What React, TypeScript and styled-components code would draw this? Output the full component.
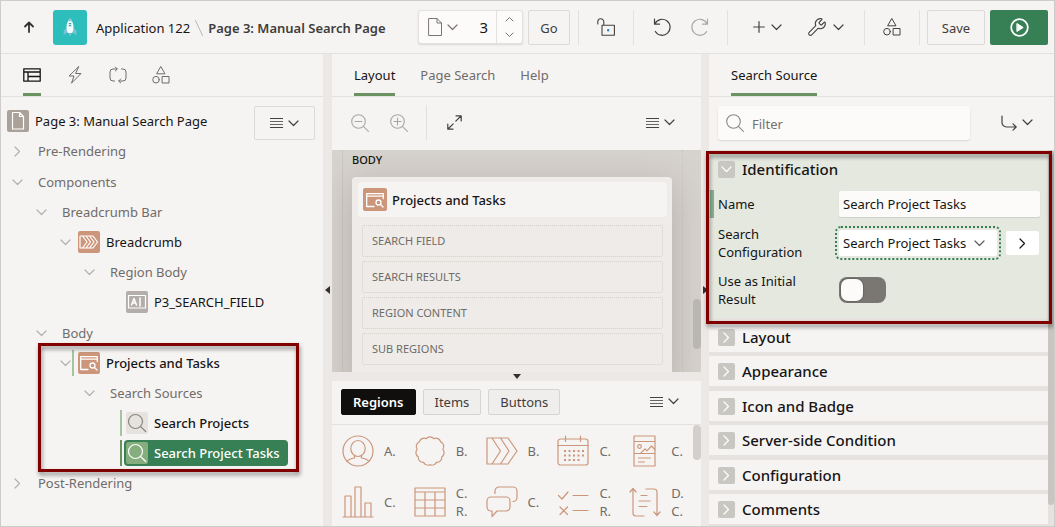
import React from 'react';
import styled, { createGlobalStyle, css } from 'styled-components';
import { Wrench } from 'lucide-react';

const c = {
  page: '#f6f4f3',
  gutter: '#ece8e5',
  line: '#e3e0dd',
  frame: '#cfcdcb',
  green: '#377f54',
  underline: '#6b9362',
  text: '#161513',
  muted: '#6f6c69',
  dim: '#a9a6a3',
  clay: '#cc967b',
  canvas: '#d6d2cd',
  card: '#eeebe8',
  callout: '#800000',
};

const Global = createGlobalStyle`
  *, *::before, *::after { box-sizing: border-box; }
  body { margin: 0; background: ${c.page}; color: ${c.text}; font: 13px/18px 'Noto Sans', sans-serif; }
  button, input, select { font: inherit; color: inherit; margin: 0; }
  button { background: none; border: 0; padding: 0; cursor: pointer; }
  ul { list-style: none; margin: 0; padding: 0; }
  h1, h2, h3, p { margin: 0; font-size: inherit; }
  svg { display: block; flex: none; }
`;

/* ---------- icons ---------- */

interface IconProps {
  w: number;
  h?: number;
  sw?: number;
  children: React.ReactNode;
}

const Icon = ({ w, h = w, sw = 1, children }: IconProps) => (
  <svg width={w} height={h} viewBox={`0 0 ${w} ${h}`} fill="none" stroke="currentColor" strokeWidth={sw} strokeLinecap="round" strokeLinejoin="round" aria-hidden="true">
    {children}
  </svg>
);

const ChevronDown = () => (
  <Icon w={11} h={7} sw={1.2}><path d="M1 1l4.5 4.5L10 1" /></Icon>
);
const ChevronUp = () => (
  <Icon w={9} h={6}><path d="M1 5l3.500-3.500L8 5" /></Icon>
);
const SmallDown = () => (
  <Icon w={9} h={6}><path d="M1 1l3.500 3.500L8 1" /></Icon>
);
const ChevronRight = () => (
  <Icon w={7} h={11} sw={1.2}><path d="M1 1l4.5 4.5L1 10" /></Icon>
);
const Lines = () => (
  <Icon w={13} h={12}>
    <path d="M0 1.500h13M0 10.500h13" strokeLinecap="butt" />
    <path d="M0 4.500h13M0 7.500h13" strokeLinecap="butt" strokeOpacity=".8" />
  </Icon>
);
const PageIcon = () => (
  <Icon w={14} h={18}><path d="M1 .5h8l4.500 4.500v12.500h-12.500zM9 .5v4.500h4.500" /></Icon>
);
const Magnifier = ({ sign }: { sign?: 'plus' | 'minus' }) => (
  <Icon w={18} h={18} sw={1.1}>
    <circle cx="7.500" cy="7.500" r="6.800" />
    <path d="M12.400 12.400l5 5" />
    {sign && <path d="M4 7.500h7" />}
    {sign === 'plus' && <path d="M7.500 4v7" />}
  </Icon>
);
const Shapes = () => (
  <Icon w={18} h={18}><path d="M9 .8l4 7h-8zM10.500 10.500h6.500v6.500h-6.500z" /><circle cx="4" cy="13.700" r="3.300" /></Icon>
);
const UpArrow = () => (
  <Icon w={12} h={12} sw={1.8}><path d="M6 11V1.500M2 5.500L6 1.500l4 4" /></Icon>
);
const Rocket = () => (
  <Icon w={14} h={18} sw={0}>
    <path d="M3.500 9.500L.6 13v4l4-2.500zM10.500 9.500l2.900 3.500v4l-4-2.500z" fill="#7cc0dc" />
    <path d="M7 1.500c2.700 2 3.500 4.500 3.500 7 0 2.400-.4 4.400-1.300 6.500H4.800C3.900 12.900 3.500 10.900 3.500 8.500 3.500 6 4.300 3.500 7 1.500z" fill="#f4fbfb" />
    <path d="M7 0c1 .8 1.900 2 2.400 3.200H4.600C5.100 2 6 .8 7 0zM5.400 15.500h3.200L7 18z" fill="#8fcbe0" />
    <path d="M5.800 5h2.400v1.200H5.800zM5.800 7h2.400v1.200H5.800z" fill="#3aa6ac" />
  </Icon>
);
const Unlock = () => (
  <Icon w={18} h={18} sw={1.1}>
    <path d="M.8 6V3.800a3 3 0 016 0v3.500M5 7.300h12.400v9.900H5z" />
    <circle cx="11.200" cy="12.200" r=".7" fill="#3584c6" stroke="#3584c6" />
  </Icon>
);
const Undo = () => (
  <Icon w={18} h={18} sw={1.2}><path d="M1.500 1.200v5h5M1.800 6A8 8 0 1 1 2.300 13.500" /></Icon>
);
const Redo = () => (
  <Icon w={18} h={18} sw={1.2}><path d="M16.500 1.200v5h-5M16.200 6A8 8 0 1 0 15.700 13.500" /></Icon>
);
const Plus = () => (
  <Icon w={12} h={12} sw={1.2}><path d="M6 .7v10.600M.7 6h10.600" /></Icon>
);
const Run = () => (
  <Icon w={19} h={19} sw={1.8}><circle cx="9.500" cy="9.500" r="8.300" /><path d="M7.200 5.700l6 3.800-6 3.800z" fill="currentColor" strokeWidth="1" /></Icon>
);
const Tree = () => (
  <Icon w={18} h={14} sw={1.3}><path d="M.8.8h16.400v12.400H.8zM.8 4h16.400M5 4v9M5 8.500h12" /></Icon>
);
const Bolt = () => (
  <Icon w={14} h={18}><path d="M10.500.8L1 10h5l-2.500 7.200L13 7.500H8z" /></Icon>
);
const Cycle = () => (
  <Icon w={18} h={18}>
    <path d="M8 3H4A3 3 0 001 6v6a3 3 0 003 3h1.500M10 15h4a3 3 0 003-3V6a3 3 0 00-3-3h-1.500" />
    <path d="M6.300 1L8.300 3l-2 2M11.700 13L9.700 15l2 2" />
  </Icon>
);
const Expand = () => (
  <Icon w={15} h={15} sw={1.2}><path d="M9 .8h5.200V6M14 1L8.800 6.200M6 14.200H.8V9M1 14l5.200-5.200" /></Icon>
);
const GoTo = () => (
  <Icon w={16} h={16} sw={1.2}><path d="M1 1v6.500a4.500 4.500 0 004.500 4.500H15M12 8.800L15.200 12 12 15.200" /></Icon>
);
const TilePage = () => (
  <Icon w={22} sw={1.2}><path d="M5.500 2.500h7l4 4v12.500h-11zM12.500 2.500v4h4" /></Icon>
);
const TileBreadcrumb = () => (
  <Icon w={22} sw={1.2}><path d="M2 5h13l4.500 6-4.500 6H2zM4.500 5L9 11l-4.500 6M8 5l4.500 6L8 17M11.500 5l4.500 6-4.500 6" /></Icon>
);
const TileField = () => (
  <Icon w={22} sw={1.2}><path d="M2.500 4.500h17v12.500h-17z" /><path d="M5.500 14l2.500-6.500 2.500 6.500M6.400 12h3.200M14 7v8" strokeWidth="1.500" /></Icon>
);
const TileSearchRegion = () => (
  <Icon w={22} sw={1.3}>
    <path d="M10 17.500H2.700V4.700h16.600v5M2.700 7.200h16.600" />
    <circle cx="14.500" cy="13.500" r="2.500" /><path d="M16.500 15.500l2.500 2.500" />
  </Icon>
);
const TileSearch = () => (
  <Icon w={22} sw={1.2}><circle cx="9.500" cy="9.500" r="7" /><path d="M14.500 14.500l5.200 5" /></Icon>
);

const Avatar = () => (
  <Icon w={32} sw={1.2}>
    <circle cx="16" cy="16" r="15" /><ellipse cx="16" cy="13.500" rx="7.200" ry="8" />
    <path d="M5 26.500c1.500-2 3.500-3 7.500-3.500v-2.500M27 26.500c-1.500-2-3.500-3-7.500-3.500v-2.500" />
  </Icon>
);
const Badge = () => (
  <Icon w={32} sw={1.2}>
    <path d="M12.200 3.600a5 5 0 017.600 0 5 5 0 016.900 3.300 5 5 0 012.200 7.400 5 5 0 01-1.100 7.500 5 5 0 01-5.400 5.600 5 5 0 01-6.400 2.300 5 5 0 01-6.400-2.300 5 5 0 01-5.400-5.600 5 5 0 01-1.100-7.500 5 5 0 012.200-7.400 5 5 0 016.900-3.300z" />
  </Icon>
);
const BreadcrumbBig = () => (
  <Icon w={32} sw={1.2}><path d="M1 3h21l9 13-9 13H1zM6 3l8.500 13L6 29M14.500 3L23 16l-8.500 13" /></Icon>
);
const Calendar = () => (
  <Icon w={32} sw={1.2}>
    <rect x="1" y="4" width="30" height="26" rx="2.500" />
    <path d="M1 10.500h30M8.500 1v5.500M23.500 1v5.500" />
    <path d="M7 16h20M7 20.500h20M7 25h15.500" strokeWidth="2" strokeLinecap="butt" strokeDasharray="2 2.500" />
  </Icon>
);
const Cards = () => (
  <Icon w={32} sw={1.2}>
    <path d="M5 1h21v30H5zM5 6.500h21M5 18.500h21M9.500 23h12M9.500 27h6" />
    <circle cx="10.500" cy="11.500" r="1.800" /><path d="M11.500 18.300l4.500-4.500 2 2 4.500-4.800 3.300 3.500" />
  </Icon>
);
const Chart = () => (
  <Icon w={32} sw={1.2}><path d="M1 31h30M3 31V10h6v21M13 31V1h6v30M23 31V17h6v14" /></Icon>
);
const Grid = () => (
  <Icon w={32} sw={1.2}><path d="M1 2h30v28H1zM1 6h30M1 14h30M1 22h30M11 6v24M21 6v24" /></Icon>
);
const Comments = () => (
  <Icon w={32} sw={1.2}>
    <path d="M5 11h15a4 4 0 014 4v6a4 4 0 01-4 4h-9l-5 5.500V25H5a4 4 0 01-4-4v-6a4 4 0 014-4z" />
    <path d="M9 7.500V5a4 4 0 014-4h14a4 4 0 014 4v6.500a4 4 0 01-4 4" />
  </Icon>
);
const Checks = () => (
  <Icon w={32} sw={1.2}><path d="M1.500 9.500l3.500 3.500L11 6M16 9.500h15M3 21l7.500 7.500M10.500 21L3 28.500M16 24.500h15" /></Icon>
);
const Scroller = () => (
  <Icon w={32} sw={1.2}>
    <path d="M4 3v24a3 3 0 003 3h8M1 6l3-3.500L7 6M28 29V5.500A3 3 0 0025 3h-8M25 26l3 3.500 3-3.500M12 9.500h6M10 15h11M10 20.500h8" />
  </Icon>
);

/* ---------- shell ---------- */

const App = styled.div`
  height: 100vh;
  display: flex;
  flex-direction: column;
  border: 1px solid ${c.frame};
  overflow: hidden;
`;
const Header = styled.header`
  display: flex;
  align-items: center;
  height: 53px;
  flex: none;
  padding: 0 6px 0 22px;
  border-bottom: 1px solid ${c.line};
`;
const UpButton = styled.button`
  margin-right: 18px;
  color: #33312f;
`;
const AppTile = styled.span`
  display: grid;
  place-items: center;
  width: 34px;
  height: 35px;
  margin-right: 9px;
  border-radius: 3px;
  background: #2dbdbb;
`;
const Crumbs = styled.nav`
  display: flex;
  align-items: center;
  gap: 5px;
  flex: 1;
  min-width: 0;
  padding-top: 2px;
  white-space: nowrap;
`;
const CrumbLink = styled.a`
  color: ${c.text};
  text-decoration: none;
`;
const Slash = styled.span`
  color: #b9b6b3;
`;
const Title = styled.h1`
  font-size: 13px;
  font-weight: 600;
  color: #3f3d3b;
`;
const PagePicker = styled.div`
  display: flex;
  width: 105px;
  height: 34px;
  border: 1px solid ${c.line};
  border-radius: 3px;
  background: #fcfbfa;
  box-shadow: 0 1px 2px rgba(0, 0, 0, 0.12);
`;
const PickerMenu = styled.button`
  display: flex;
  align-items: center;
  gap: 5px;
  padding-left: 9px;
  color: #7b7672;
`;
const PageNumber = styled.input`
  flex: 1;
  min-width: 0;
  border: 0;
  padding: 0 8px 0 0;
  background: none;
  text-align: right;
  font-size: 15px;
`;
const Spinner = styled.div`
  display: grid;
  width: 26px;
  border-left: 1px solid ${c.line};
  color: #7b7672;
  button { display: grid; place-items: center; }
`;
const Outline = styled.button<{ $w: number }>`
  width: ${(p) => p.$w}px;
  height: 35px;
  padding-top: 2px;
  border: 1px solid #dcd9d6;
  border-radius: 2px;
  color: #3f3d3b;
`;
const RunButton = styled.button`
  display: grid;
  place-items: center;
  width: 58px;
  height: 35px;
  border-radius: 2px;
  background: ${c.green};
  color: #fff;
`;
const Controls = styled.div`
  display: flex;
  align-items: center;
  gap: 5px;
`;
const ToolGroup = styled.div<{ $w: number }>`
  display: flex;
  align-items: center;
  justify-content: center;
  width: ${(p) => p.$w}px;
  height: 35px;
  border-left: 1px solid ${c.line};
`;
const Tools = styled.div`
  display: flex;
  margin: 0 7px 0 8px;
  border-right: 1px solid ${c.line};
`;
const Tool = styled.button<{ $w: number; $off?: boolean }>`
  display: flex;
  align-items: center;
  justify-content: center;
  gap: 6px;
  width: ${(p) => p.$w}px;
  height: 35px;
  color: ${(p) => (p.$off ? c.dim : '#45413e')};
`;

const Workspace = styled.main`
  flex: 1;
  min-height: 0;
  display: grid;
  grid-template-columns: minmax(0, 322fr) 9px minmax(0, 369fr) 8px minmax(0, 345fr);
  grid-template-rows: minmax(0, 1fr);
`;
const Panel = styled.section`
  display: flex;
  flex-direction: column;
  min-width: 0;
  min-height: 0;
`;
const Splitter = styled.div<{ $row?: boolean }>`
  display: flex;
  flex: none;
  align-items: center;
  justify-content: center;
  background: ${c.gutter};
  color: #33312f;
  ${(p) => p.$row && css`height: 9px;`}
`;
const Tabs = styled.div`
  display: flex;
  flex: none;
  gap: 25px;
  height: 43px;
  padding: 0 22px;
  border-bottom: 1px solid ${c.line};
`;
const Tab = styled.button<{ $on?: boolean }>`
  display: grid;
  place-items: center;
  min-width: 18px;
  padding-top: 3px;
  border-bottom: 3px solid ${(p) => (p.$on ? c.underline : 'transparent')};
  color: ${(p) => (p.$on ? c.text : c.muted)};
  white-space: nowrap;
`;
const IconMenu = styled.button<{ $boxed?: boolean }>`
  display: flex;
  align-items: center;
  justify-content: center;
  gap: 5px;
  width: 61px;
  height: 34px;
  border: 1px solid ${(p) => (p.$boxed ? '#dcd9d6' : 'transparent')};
  border-radius: 2px;
  color: #45413e;
`;

/* ---------- component tree ---------- */

const PageRow = styled.div`
  display: flex;
  align-items: center;
  gap: 6px;
  flex: none;
  height: 34px;
  margin-top: 9px;
  padding: 0 8px 0 6px;
`;
const PageRowTitle = styled.h2`
  flex: 1;
  margin-bottom: 4px;
  font-weight: 400;
`;
const Tile = styled.span<{ $bg: string; $raise?: boolean }>`
  display: grid;
  place-items: center;
  flex: none;
  width: 22px;
  height: 22px;
  border-radius: 2px;
  background: ${(p) => p.$bg};
  color: #fff;
  ${(p) => p.$raise && css`margin-bottom: 4px;`}
`;
const TreeRows = styled.div`
  margin-top: -4px;
`;
const RowBox = styled.li<{ $level: number; $section?: boolean }>`
  display: flex;
  align-items: center;
  height: 30px;
  margin-top: ${(p) => (p.$section ? 1 : 0)}px;
  padding-left: ${(p) => 9 + p.$level * 24}px;
  white-space: nowrap;
`;
const Caret = styled.button`
  display: grid;
  place-items: center;
  width: 14px;
  height: 20px;
  color: #b3b0ad;
`;
const Group = styled.span`
  margin-left: 14px;
  color: ${c.muted};
`;
const Mark = styled.span<{ $color: string }>`
  width: 2px;
  height: 26px;
  margin-right: 2px;
  background: ${(p) => p.$color};
`;
const Node = styled.span<{ $selected?: boolean; $bold?: boolean }>`
  display: flex;
  align-items: center;
  gap: 6px;
  height: 26px;
  padding: 0 8px 0 2px;
  border-radius: 4px;
  font-weight: ${(p) => (p.$bold ? 500 : 400)};
  ${(p) => p.$selected && css`background: ${c.green}; color: #fff;`}
`;
const CalloutGroup = styled.div`
  position: relative;
`;
const Callout = styled.div<{ $inset: string }>`
  position: absolute;
  inset: ${(p) => p.$inset};
  z-index: 2;
  border: 3px solid ${c.callout};
  filter: drop-shadow(1px 3px 2px rgba(0, 0, 0, 0.45));
  pointer-events: none;
`;

interface RowProps {
  level: number;
  text: string;
  open?: boolean;
  leaf?: boolean;
  section?: boolean;
  icon?: React.ReactNode;
  tile?: string;
  mark?: string;
  bold?: boolean;
  selected?: boolean;
}

const Row = ({ level, text, open, leaf, section, icon, tile, mark, bold, selected }: RowProps) => (
  <RowBox $level={level} $section={section}>
    <Caret as={leaf ? 'span' : 'button'} aria-label={leaf ? undefined : `Toggle ${text}`}>
      {!leaf && (open ? <ChevronDown /> : <ChevronRight />)}
    </Caret>
    {icon ? (
      <>
        <Mark $color={mark ?? 'transparent'} />
        <Node $selected={selected} $bold={bold}>
          <Tile $bg={tile ?? c.clay}>{icon}</Tile>
          {text}
        </Node>
      </>
    ) : (
      <Group>{text}</Group>
    )}
  </RowBox>
);

/* ---------- layout editor ---------- */

const Toolbar = styled.div`
  display: flex;
  align-items: center;
  flex: none;
  height: 53px;
  padding: 0 10px 2px 9px;
`;
const ToolbarEnd = styled.div`
  margin-left: auto;
`;
const Rule = styled.span`
  width: 1px;
  height: 35px;
  margin: 0 8px;
  background: ${c.line};
`;
const Canvas = styled.div`
  position: relative;
  flex: 1;
  min-height: 0;
  overflow: hidden;
  padding: 0 18px 0 10px;
  background: ${c.canvas};
`;
const CanvasZone = styled.div`
  height: 100%;
  padding: 1px 10px 0 9px;
  border: solid #c9c5c0;
  border-width: 0 1px;
  border-right-style: dotted;
`;
const ZoneLabel = styled.h2`
  font-size: 11px;
  font-weight: 500;
`;
const RegionCard = styled.div`
  margin-top: 8px;
  padding: 5px 5px 24px 6px;
  border-radius: 4px;
  background: ${c.card};
  box-shadow: 0 8px 36px rgba(60, 50, 40, 0.22);
`;
const RegionTitle = styled.h3`
  display: flex;
  align-items: center;
  gap: 5px;
  height: 35px;
  padding-left: 5px;
  border-radius: 4px;
  background: ${c.page};
  font-weight: 500;
`;
const TileLarge = styled(Tile)`
  width: 24px;
  height: 23px;
`;
const Slots = styled.ul`
  display: grid;
  gap: 4px;
  padding: 8px 4px 0;
`;
const Slot = styled.li`
  height: 32px;
  padding: 0 9px;
  border: 1px dotted #d3cfcb;
  border-radius: 2px;
  color: ${c.muted};
  font-size: 11px;
  line-height: 30px;
`;
const Thumb = styled.div<{ $top: string; $h: string; $w: number; $color: string }>`
  position: absolute;
  top: ${(p) => p.$top};
  right: 0;
  width: ${(p) => p.$w}px;
  height: ${(p) => p.$h};
  border-radius: 4px;
  background: ${(p) => p.$color};
`;

/* ---------- gallery ---------- */

const GalleryBar = styled.div`
  display: flex;
  align-items: center;
  gap: 7px;
  flex: none;
  height: 44px;
  padding: 0 6px 2px 9px;
  border-bottom: 1px solid ${c.line};
`;
const Pill = styled.button<{ $on?: boolean }>`
  height: 26px;
  padding: 0 11px;
  border: 1px solid ${(p) => (p.$on ? '#100f0d' : '#d6d3d0')};
  border-radius: 2px;
  background: ${(p) => (p.$on ? '#100f0d' : '#f0eeec')};
  color: ${(p) => (p.$on ? '#fff' : '#3f3d3b')};
  font-weight: ${(p) => (p.$on ? 600 : 400)};
`;
const Gallery = styled.div`
  position: relative;
  flex: none;
`;
const GalleryItems = styled.ul`
  display: grid;
  grid-template-columns: repeat(5, minmax(0, 1fr));
  align-content: start;
  row-gap: 15px;
  height: 101px;
  padding: 8px 0 0 10px;
`;
const GalleryItem = styled.li`
  display: flex;
  align-items: center;
  gap: 10px;
  height: 36px;
  color: ${c.muted};
  svg { color: ${c.clay}; }
`;
const ItemText = styled.span`
  width: 12px;
`;

/* ---------- property editor ---------- */

const FilterBox = styled.label`
  display: flex;
  align-items: center;
  gap: 8px;
  flex: 1;
  height: 34px;
  padding-left: 8px;
  border-radius: 3px;
  background: #fcfbfa;
  box-shadow: 0 1px 2px rgba(0, 0, 0, 0.12);
  color: #8b8783;
`;
const FilterInput = styled.input`
  flex: 1;
  min-width: 0;
  border: 0;
  padding: 2px 0 0;
  background: none;
  outline: 0;
  &::placeholder { color: #75716e; opacity: 1; }
`;
const FilterBar = styled(Toolbar)`
  gap: 16px;
  padding-right: 7px;
`;
const Properties = styled.div`
  position: relative;
  flex: 1;
  min-height: 0;
  padding-right: 6px;
  background: #e6e2df;
`;
const Section = styled.section`
  border-bottom: 4px solid #e6e2df;
  background: ${c.page};
  &:nth-child(odd) { border-bottom-width: 5px; }
`;
const SectionHead = styled.button`
  display: flex;
  align-items: center;
  gap: 7px;
  width: 100%;
  height: 30px;
  padding-left: 9px;
  text-align: left;
`;
const SectionName = styled.span`
  font-size: 15px;
  font-weight: 500;
`;
const Toggler = styled.span`
  display: grid;
  place-items: center;
  width: 17px;
  height: 17px;
  border-radius: 2px;
  background: #c9c7c1;
  color: #fff;
`;
const Identification = styled.div`
  position: relative;
  padding: 4px 0 1px;
  background: #e4e8df;
  border-bottom: 4px solid #e6e2df;
`;
const Field = styled.div<{ $h: number }>`
  position: relative;
  display: flex;
  align-items: center;
  min-height: ${(p) => p.$h}px;
  padding: 0 8px 0 9px;
`;
const ChangeBar = styled.span`
  position: absolute;
  left: 1px;
  width: 4px;
  height: 28px;
  background: #85b393;
`;
const FieldLabel = styled.label`
  flex: none;
  width: 121px;
  padding-right: 28px;
`;
const TextBox = styled.input`
  flex: 1;
  min-width: 0;
  height: 26px;
  padding: 0 4px;
  border: 0;
  border-radius: 2px;
  background: #fcfbfa;
  box-shadow: 0 1px 1px rgba(0, 0, 0, 0.1);
`;
const SelectWrap = styled.div`
  position: relative;
  display: flex;
  flex: 1;
  min-width: 0;
  outline: 2px dotted ${c.green};
  outline-offset: 2px;
  border-radius: 2px;
  svg { position: absolute; right: 12px; top: 10px; pointer-events: none; color: #5f5b58; }
`;
const Select = styled.select`
  flex: 1;
  min-width: 0;
  height: 26px;
  padding: 0 4px;
  border: 0;
  border-radius: 2px;
  background: #fff;
  appearance: none;
`;
const OpenButton = styled.button`
  display: grid;
  place-items: center;
  width: 33px;
  height: 24px;
  margin: 0 1px 0 9px;
  border-radius: 2px;
  background: #fff;
`;
const Switch = styled.input`
  appearance: none;
  width: 47px;
  height: 26px;
  border-radius: 8px;
  background: #7a7772;
  &::before {
    content: '';
    display: block;
    width: 22px;
    height: 22px;
    margin: 2px;
    border-radius: 7px;
    background: #fcfbfa;
    box-shadow: 0 0 1px 1px rgba(0, 0, 0, 0.15);
  }
`;

const gallery: [React.ReactNode, string][] = [
  [<Avatar />, 'A.'], [<Badge />, 'B.'], [<BreadcrumbBig />, 'B.'], [<Calendar />, 'C.'], [<Cards />, 'C.'],
  [<Chart />, 'C.'], [<Grid />, 'C. R.'], [<Comments />, 'C.'], [<Checks />, 'C. R.'], [<Scroller />, 'D. C.'],
];

const GreySearch = () => (
  <Icon w={22} sw={1.2}>
    <circle cx="9.500" cy="9.500" r="7" stroke="#8b8783" />
    <path d="M14.500 14.500l5.200 5" stroke="#8b8783" />
  </Icon>
);

export default function PageDesigner() {
  return (
    <App>
      <Global />
      <Header>
        <UpButton aria-label="Up"><UpArrow /></UpButton>
        <AppTile><Rocket /></AppTile>
        <Crumbs>
          <CrumbLink href="#app">Application 122</CrumbLink>
          <Slash><Icon w={8} h={16}><path d="M.5.5l7 15" /></Icon></Slash>
          <Title>Page 3: Manual Search Page</Title>
        </Crumbs>
        <Controls>
          <PagePicker>
            <PickerMenu aria-label="Choose page"><PageIcon /><ChevronDown /></PickerMenu>
            <PageNumber aria-label="Page number" defaultValue="3" />
            <Spinner>
              <button aria-label="Next page"><ChevronUp /></button>
              <button aria-label="Previous page"><SmallDown /></button>
            </Spinner>
          </PagePicker>
          <Outline $w={42}>Go</Outline>
        </Controls>
        <Tools>
          <ToolGroup $w={55}><Tool $w={38} aria-label="Unlock"><Unlock /></Tool></ToolGroup>
          <ToolGroup $w={94}>
            <Tool $w={38} aria-label="Undo"><Undo /></Tool>
            <Tool $w={38} $off aria-label="Redo"><Redo /></Tool>
          </ToolGroup>
          <ToolGroup $w={137}>
            <Tool $w={58} aria-label="Create"><Plus /><ChevronDown /></Tool>
            <Tool $w={58} aria-label="Utilities"><Wrench size={20} strokeWidth={1.3} /><ChevronDown /></Tool>
          </ToolGroup>
          <ToolGroup $w={55}><Tool $w={38} aria-label="Shared components"><Shapes /></Tool></ToolGroup>
        </Tools>
        <Controls>
          <Outline $w={58}>Save</Outline>
          <RunButton aria-label="Save and run page"><Run /></RunButton>
        </Controls>
      </Header>

      <Workspace>
        <Panel>
          <Tabs role="tablist">
            <Tab $on role="tab" aria-label="Rendering"><Tree /></Tab>
            <Tab role="tab" aria-label="Dynamic actions"><Bolt /></Tab>
            <Tab role="tab" aria-label="Processing"><Cycle /></Tab>
            <Tab role="tab" aria-label="Shared components"><Shapes /></Tab>
          </Tabs>
          <PageRow>
            <Tile $bg="#aaa198" $raise><TilePage /></Tile>
            <PageRowTitle>Page 3: Manual Search Page</PageRowTitle>
            <IconMenu $boxed aria-label="Tree menu"><Lines /><ChevronDown /></IconMenu>
          </PageRow>
          <TreeRows>
            <ul>
              <Row level={0} text="Pre-Rendering" />
              <Row level={0} text="Components" open section />
              <Row level={1} text="Breadcrumb Bar" open />
              <Row level={2} text="Breadcrumb" open icon={<TileBreadcrumb />} />
              <Row level={3} text="Region Body" open />
              <Row level={4} text="P3_SEARCH_FIELD" leaf icon={<TileField />} tile="#b3adab" />
              <Row level={1} text="Body" open section />
            </ul>
            <CalloutGroup>
              <ul>
                <Row level={2} text="Projects and Tasks" open icon={<TileSearchRegion />} mark="#a5c3a0" bold />
                <Row level={3} text="Search Sources" open />
                <Row level={4} text="Search Projects" leaf icon={<GreySearch />} tile="#e5e2df" mark="#a5c3a0" bold />
                <Row level={4} text="Search Project Tasks" leaf icon={<TileSearch />} tile="#86ad7d" mark="#6b9362" bold selected />
              </ul>
              <Callout $inset="-5px 24px -4px 37px" />
            </CalloutGroup>
            <ul><Row level={0} text="Post-Rendering" /></ul>
          </TreeRows>
        </Panel>

        <Splitter><Icon w={5} h={8} sw={0}><path d="M5 0v8L0 4z" fill="currentColor" /></Icon></Splitter>

        <Panel>
          <Tabs role="tablist">
            <Tab $on role="tab">Layout</Tab>
            <Tab role="tab">Page Search</Tab>
            <Tab role="tab">Help</Tab>
          </Tabs>
          <Toolbar>
            <Tool $w={38} $off aria-label="Zoom out"><Magnifier sign="minus" /></Tool>
            <Tool $w={39} $off aria-label="Zoom in"><Magnifier sign="plus" /></Tool>
            <Rule />
            <Tool $w={38} aria-label="Expand"><Expand /></Tool>
            <ToolbarEnd><IconMenu aria-label="Layout menu"><Lines /><ChevronDown /></IconMenu></ToolbarEnd>
          </Toolbar>
          <Canvas>
            <CanvasZone>
              <ZoneLabel>BODY</ZoneLabel>
              <RegionCard>
                <RegionTitle><TileLarge $bg={c.clay}><TileSearchRegion /></TileLarge>Projects and Tasks</RegionTitle>
                <Slots>
                  <Slot>SEARCH FIELD</Slot>
                  <Slot>SEARCH RESULTS</Slot>
                  <Slot>REGION CONTENT</Slot>
                  <Slot>SUB REGIONS</Slot>
                </Slots>
              </RegionCard>
            </CanvasZone>
            <Thumb $top="67%" $h="50px" $w={8} $color="#bab6b2" />
          </Canvas>
          <Splitter $row><Icon w={8} h={5} sw={0}><path d="M0 0h8L4 5z" fill="currentColor" /></Icon></Splitter>
          <GalleryBar>
            <Pill $on>Regions</Pill>
            <Pill>Items</Pill>
            <Pill>Buttons</Pill>
            <ToolbarEnd><IconMenu aria-label="Gallery menu"><Lines /><ChevronDown /></IconMenu></ToolbarEnd>
          </GalleryBar>
          <Gallery>
            <GalleryItems>
              {gallery.map(([icon, text], i) => (
                <GalleryItem key={i}>{icon}<ItemText>{text}</ItemText></GalleryItem>
              ))}
            </GalleryItems>
            <Thumb $top="0" $h="35px" $w={8} $color="#d2cfcc" />
          </Gallery>
        </Panel>

        <Splitter><Icon w={5} h={8} sw={0}><path d="M0 0l5 4-5 4z" fill="currentColor" /></Icon></Splitter>

        <Panel>
          <Tabs role="tablist">
            <Tab $on role="tab">Search Source</Tab>
          </Tabs>
          <FilterBar>
            <FilterBox>
              <Magnifier />
              <FilterInput type="text" placeholder="Filter" aria-label="Filter" />
            </FilterBox>
            <IconMenu aria-label="Go to group"><GoTo /><ChevronDown /></IconMenu>
          </FilterBar>
          <Properties>
            <Identification>
              <SectionHead aria-expanded="true">
                <Toggler><ChevronDown /></Toggler>
                <SectionName>Identification</SectionName>
              </SectionHead>
              <Field $h={40}>
                <ChangeBar />
                <FieldLabel htmlFor="name">Name</FieldLabel>
                <TextBox id="name" defaultValue="Search Project Tasks" />
              </Field>
              <Field $h={38}>
                <FieldLabel htmlFor="config">Search Configuration</FieldLabel>
                <SelectWrap>
                  <Select id="config"><option>Search Project Tasks</option></Select>
                  <ChevronDown />
                </SelectWrap>
                <OpenButton aria-label="Open configuration"><ChevronRight /></OpenButton>
              </Field>
              <Field $h={55}>
                <FieldLabel htmlFor="initial">Use as Initial Result</FieldLabel>
                <Switch id="initial" type="checkbox" role="switch" />
              </Field>
              <Callout $inset="1px -4px -6px -3px" />
            </Identification>
            {['Layout', 'Appearance', 'Icon and Badge', 'Server-side Condition', 'Configuration', 'Comments'].map((name) => (
              <Section key={name}>
                <SectionHead aria-expanded="false">
                  <Toggler><ChevronRight /></Toggler>
                  <SectionName>{name}</SectionName>
                </SectionHead>
              </Section>
            ))}
            <Thumb $top="0" $h="355px" $w={6} $color="#c9c5c1" />
          </Properties>
        </Panel>
      </Workspace>
    </App>
  );
}
